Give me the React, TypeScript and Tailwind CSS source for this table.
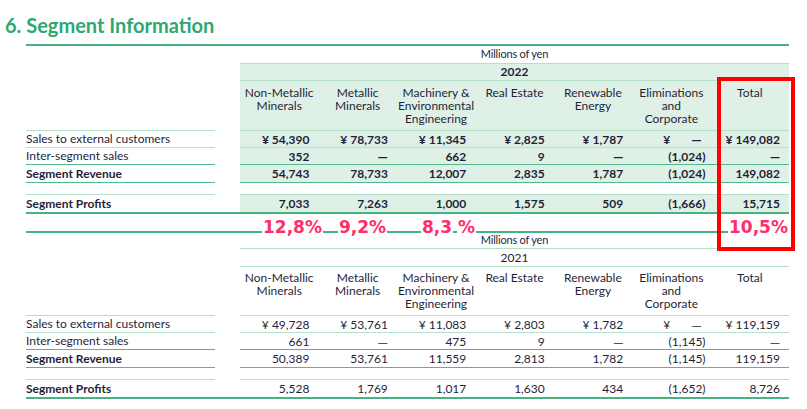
import React from "react";

type Line = "light" | "green" | "thick";

const HEADERS: string[][] = [
  ["Non-Metallic", "Minerals"],
  ["Metallic", "Minerals"],
  ["Machinery &", "Environmental", "Engineering"],
  ["Real Estate"],
  ["Renewable", "Energy"],
  ["Eliminations", "and", "Corporate"],
  ["Total"],
];

const YEN_DASH = "YEN_DASH";

const DATA_2022 = {
  sales: ["¥ 54,390", "¥ 78,733", "¥ 11,345", "¥ 2,825", "¥ 1,787", YEN_DASH, "¥ 149,082"],
  inter: ["352", "—", "662", "9", "—", "(1,024)", "—"],
  revenue: ["54,743", "78,733", "12,007", "2,835", "1,787", "(1,024)", "149,082"],
  profits: ["7,033", "7,263", "1,000", "1,575", "509", "(1,666)", "15,715"],
};

const DATA_2021 = {
  sales: ["¥ 49,728", "¥ 53,761", "¥ 11,083", "¥ 2,803", "¥ 1,782", YEN_DASH, "¥ 119,159"],
  inter: ["661", "—", "475", "9", "—", "(1,145)", "—"],
  revenue: ["50,389", "53,761", "11,559", "2,813", "1,782", "(1,145)", "119,159"],
  profits: ["5,528", "1,769", "1,017", "1,630", "434", "(1,652)", "8,726"],
};

function lineClass(line: Line) {
  if (line === "thick") return "border-b-2 border-[#45b482]";
  if (line === "green") return "border-b border-[#52ba8a]";
  return "border-b border-[#b4e0ca]";
}

function Cell({ value }: { value: string }) {
  if (value === YEN_DASH) {
    return (
      <div className="flex items-center justify-between pl-[31px] pr-[9px]">
        <span>¥</span>
        <span className="font-['DejaVu_Sans',sans-serif] text-[10px]">—</span>
      </div>
    );
  }
  if (value === "—") {
    return <div className="text-right pr-[9px] font-['DejaVu_Sans',sans-serif] text-[10px]">—</div>;
  }
  const paren = value.startsWith("(");
  return <div className={`text-right ${paren ? "pr-[5px]" : "pr-[9px]"}`}>{value}</div>;
}

function DataRow({
  label,
  values,
  h,
  line,
  bold,
  labelBold,
  tint,
  full,
}: {
  label: string;
  values: string[];
  h: string;
  line: Line;
  bold: boolean;
  labelBold?: boolean;
  tint: boolean;
  full?: boolean;
}) {
  return (
    <div className={`flex ${h}`}>
      <div className={`w-[189px] flex items-center ${lineClass(line)} ${labelBold ? "font-bold" : ""}`}>{label}</div>
      <div className={`w-[25px] ${full ? lineClass(line) : ""}`} />
      <div
        className={`flex-1 grid grid-cols-7 items-center ${lineClass(line)} ${tint ? "bg-[#dff1e7]" : ""} ${
          bold ? "font-bold" : ""
        }`}
      >
        {values.map((v, i) => (
          <Cell key={i} value={v} />
        ))}
      </div>
    </div>
  );
}

function Gap() {
  return (
    <div className="flex h-[12px]">
      <div className="w-[189px] border-b border-[#b4e0ca]" />
      <div className="w-[25px]" />
      <div className="flex-1 border-b border-[#b4e0ca]" />
    </div>
  );
}

function YearTable({
  year,
  data,
  tint,
  bold,
  headH,
  millionsH,
  yearH,
  headPad,
}: {
  year: string;
  data: typeof DATA_2022;
  tint: boolean;
  bold: boolean;
  headH: string;
  millionsH: string;
  yearH: string;
  headPad: string;
}) {
  const tintBg = tint ? "bg-[#dff1e7]" : "";
  return (
    <div className="border-t-2 border-[#45b482]">
      <div className={`flex ${millionsH}`}>
        <div className="w-[214px]" />
        <div className="flex-1 flex items-center justify-center border-b border-[#b4e0ca] text-[11px] tracking-[-0.2px]">
          Millions of yen
        </div>
      </div>
      <div className={`flex ${yearH}`}>
        <div className="w-[214px]" />
        <div
          className={`flex-1 flex items-center justify-center border-b border-[#b4e0ca] ${tintBg} ${
            bold ? "font-bold" : ""
          }`}
        >
          {year}
        </div>
      </div>
      <div className={`flex ${headH}`}>
        <div className="w-[189px] border-b border-[#b4e0ca]" />
        <div className="w-[25px]" />
        <div className={`flex-1 grid grid-cols-7 border-b border-[#b4e0ca] ${tintBg} ${headPad}`}>
          {HEADERS.map((lines, i) => (
            <div key={i} className="flex flex-col items-center leading-[13px] whitespace-nowrap">
              {lines.map((l) => (
                <span key={l}>{l}</span>
              ))}
            </div>
          ))}
        </div>
      </div>
      <DataRow label="Sales to external customers" values={data.sales} h="h-[17px]" line="light" bold={bold} tint={tint} />
      <DataRow label="Inter-segment sales" values={data.inter} h="h-[17px]" line="green" bold={bold} tint={tint} />
      <DataRow
        label="Segment Revenue"
        values={data.revenue}
        h="h-[18px]"
        line="green"
        bold={bold}
        labelBold
        tint={tint}
      />
      <Gap />
      <DataRow
        label="Segment Profits"
        values={data.profits}
        h="h-[19px]"
        line="thick"
        bold={bold}
        labelBold
        tint={tint}
        full
      />
    </div>
  );
}

function Pct({ children, className }: { children: React.ReactNode; className: string }) {
  return (
    <span
      className={`absolute bg-white px-[1px] leading-[18px] text-[17px] font-bold text-[#ff2d6b] font-['DejaVu_Sans',sans-serif] ${className}`}
    >
      {children}
    </span>
  );
}

export default function App() {
  return (
    <div className="relative w-[807px] h-[409px] bg-white overflow-hidden text-[12px] text-[#1f1f3a] font-['Lato',sans-serif]">
      <h1 className="h-[44px] pl-[5px] pt-[12px] text-[20px] leading-[26px] font-bold text-[#2ea873]">
        6. Segment Information
      </h1>
      <div className="ml-[26px] w-[763px]">
        <YearTable
          year="2022"
          data={DATA_2022}
          tint
          bold
          millionsH="h-[18px]"
          yearH="h-[17px]"
          headH="h-[50px]"
          headPad="pt-[5px]"
        />
        <div className="h-[17px]" />
        <YearTable
          year="2021"
          data={DATA_2021}
          tint={false}
          bold={false}
          millionsH="h-[16px]"
          yearH="h-[18px]"
          headH="h-[49px]"
          headPad="pt-[4px]"
        />
      </div>

      <Pct className="left-[262px] top-[218px]">12,8%</Pct>
      <Pct className="left-[338px] top-[218px]">9,2%</Pct>
      <Pct className="left-[421px] top-[218px]">8,3</Pct>
      <Pct className="left-[457px] top-[218px]">%</Pct>
      <Pct className="left-[728px] top-[218px]">10,5%</Pct>

      <div className="absolute left-[717px] top-[77px] w-[78px] h-[174px] border-4 border-[#ff0000]" />
    </div>
  );
}
